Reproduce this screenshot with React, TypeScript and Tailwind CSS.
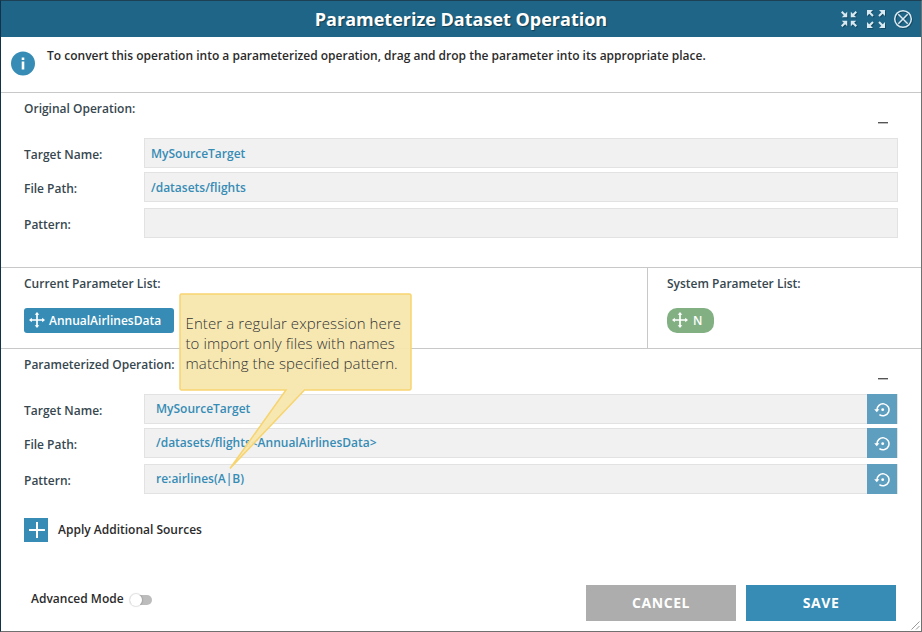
import type { ReactNode } from "react";

function CompressIcon() {
  return (
    <svg width="16" height="16" viewBox="0 0 16 16" className="drop-shadow-[1px_1px_0px_rgba(0,0,0,0.25)]" fill="none" stroke="#d9e9f1" strokeWidth="2">
      <path d="M0.700 0.700 4.500 4.500M15.300 0.700 11.500 4.500M0.700 15.300 4.500 11.500M15.300 15.300 11.500 11.500" />
      <path d="M6.200 0.800v5.400H0.800zM9.800 0.800v5.400h5.400zM6.200 15.200V9.800H0.800zM9.800 15.200V9.800h5.400z" fill="#d9e9f1" stroke="none" />
    </svg>
  );
}

function ExpandIcon() {
  return (
    <svg width="18" height="18" viewBox="0 0 18 18" className="drop-shadow-[1px_1px_0px_rgba(0,0,0,0.25)]" fill="none" stroke="#d9e9f1" strokeWidth="2">
      <path d="M1.500 1.500l4.500 4.500M16.500 1.500l-4.500 4.500M1.500 16.500l4.500-4.500M16.500 16.500l-4.500-4.500" />
      <path d="M0 0h6L0 6zM18 0h-6l6 6zM0 18h6l-6-6zM18 18h-6l6-6z" fill="#d9e9f1" stroke="none" />
    </svg>
  );
}

function CloseIcon() {
  return (
    <svg width="20" height="20" viewBox="0 0 20 20" className="drop-shadow-[1px_1px_0px_rgba(0,0,0,0.25)]" fill="none" stroke="#d9e9f1" strokeWidth="1.5">
      <circle cx="10" cy="10" r="8.3" />
      <path d="M5.3 5.3l9.4 9.4M14.7 5.3l-9.4 9.4" />
    </svg>
  );
}

function MoveIcon() {
  return (
    <svg width="16" height="16" viewBox="0 0 16 16" className="mb-px shrink-0" fill="#fff">
      <path d="M7.150 2h1.700v5.150H14v1.700H8.850V14h-1.700V8.850H2v-1.700h5.150z" />
      <path d="M8 0l2.300 2.800H5.700zM8 16l2.300-2.800H5.700zM0 8l2.800-2.300v4.600zM16 8l-2.800-2.300v4.600z" />
    </svg>
  );
}

function RestoreIcon() {
  return (
    <svg width="16" height="16" viewBox="0 0 16 16" className="mt-px" fill="none" stroke="#fff">
      <path d="M3 8.200A6 6 0 1 1 5.400 12.600" strokeWidth="1.500" />
      <path d="M0.200 7.200h5.200L2.800 10.200z" fill="#fff" stroke="none" />
      <circle cx="8.700" cy="7.700" r="1.400" fill="#fff" stroke="none" />
    </svg>
  );
}

function Label({ children }: { children: ReactNode }) {
  return <div className="whitespace-nowrap text-[12px] leading-4 font-semibold text-[#37474f]">{children}</div>;
}

function Field({ label, value, restore = false }: { label: string; value: string; restore?: boolean }) {
  return (
    <div className="flex h-[30px]">
      <div className="w-[120px] shrink-0 pt-[9px]">
        <Label>{label}</Label>
      </div>
      <div className="flex flex-1 border border-[#e2e2e2] bg-[#f1f1f1]">
        <div className={`flex-1 text-[12px] leading-4 font-semibold text-[#368cb5] ${restore ? "pt-[6px] pl-[11px]" : "pt-[7px] pl-[6px]"}`}>
          {value}
        </div>
        {restore && (
          <button className="-my-px flex w-[30px] items-center justify-center bg-[#5e9fc0]">
            <RestoreIcon />
          </button>
        )}
      </div>
    </div>
  );
}

function Collapse() {
  return <div className="h-[2px] w-[10px] border-t border-[#555] bg-[#bdbdbd]" />;
}

export default function App() {
  return (
    <div className="relative flex h-[632px] w-[922px] flex-col overflow-hidden border border-t-[#1d4055] border-r-[#707070] border-b-[#707070] border-l-[#12324a] bg-white font-['Open_Sans','Noto_Sans',sans-serif]">
      <header className="relative flex h-9 shrink-0 items-center justify-center bg-[#1e6587]">
        <h1 className="text-[18px] leading-6 font-bold whitespace-nowrap text-white [text-shadow:1px_1px_1px_rgba(0,0,0,0.4)]">
          Parameterize Dataset Operation
        </h1>
        <div className="absolute right-[8px] flex items-center">
          <CompressIcon />
          <div className="ml-[10px]">
            <ExpandIcon />
          </div>
          <div className="ml-[8px]">
            <CloseIcon />
          </div>
        </div>
      </header>

      <section className="flex h-14 shrink-0 border-b border-[#c8c8c8] pl-[10px]">
        <svg width="24" height="25" viewBox="0 0 24 25" className="mt-[14px] shrink-0">
          <circle cx="12" cy="12.500" r="12" fill="#368cb5" />
          <path d="M10.700 6.500h2.600V9h-2.600zM10.700 10.500h2.600V18.500h-2.600z" fill="#fff" />
        </svg>
        <p className="mt-[11px] ml-3 text-[12px] leading-4 font-semibold whitespace-nowrap text-[#2b2b2b]">
          To convert this operation into a parameterized operation, drag and drop the parameter into its appropriate place.
        </p>
      </section>

      <section className="h-[175px] shrink-0 border-b border-[#c8c8c8] pt-2 pr-[23px] pl-[23px]">
        <Label>Original Operation:</Label>
        <div className="flex h-[21px] justify-end pt-[5px] pr-[10px]">
          <Collapse />
        </div>
        <Field label="Target Name:" value="MySourceTarget" />
        <div className="mt-1">
          <Field label="File Path:" value="/datasets/flights" />
        </div>
        <div className="mt-[6px]">
          <Field label="Pattern:" value="" />
        </div>
      </section>

      <section className="flex h-[81px] shrink-0 border-b border-[#c8c8c8]">
        <div className="w-[647px] border-r border-[#c8c8c8] pt-2 pl-[23px]">
          <Label>Current Parameter List:</Label>
          <div className="mt-4 flex h-[25px] w-[150px] items-center gap-[4px] rounded-[3px] bg-[#368cb5] pl-[5px] text-[12px] font-semibold text-white">
            <MoveIcon />
            <span>AnnualAirlinesData</span>
          </div>
        </div>
        <div className="pt-2 pl-[19px]">
          <Label>System Parameter List:</Label>
          <div className="mt-4 flex h-[25px] w-[47px] items-center gap-[5px] rounded-[10px] bg-[#82b083] pl-[5px] text-[12px] font-semibold text-white">
            <MoveIcon />
            <span>N</span>
          </div>
        </div>
      </section>

      <section className="shrink-0 pt-2 pr-[23px] pl-[23px]">
        <Label>Parameterized Operation:</Label>
        <div className="flex h-[21px] justify-end pt-[5px] pr-[10px]">
          <Collapse />
        </div>
        <Field label="Target Name:" value="MySourceTarget" restore />
        <div className="mt-1">
          <Field label="File Path:" value="/datasets/flights<AnnualAirlinesData>" restore />
        </div>
        <div className="mt-[6px]">
          <Field label="Pattern:" value="re:airlines(A|B)" restore />
        </div>
        <div className="mt-6 flex items-center gap-[10px]">
          <button className="flex size-6 items-center justify-center bg-[#368cb5]">
            <svg width="16" height="16" viewBox="0 0 16 16" className="ml-[2px]" fill="#fff">
              <path d="M7 0h2v7h7v2H9v7H7V9H0V7h7z" />
            </svg>
          </button>
          <span className="text-[12px] leading-4 font-semibold text-[#2b2b2b]">Apply Additional Sources</span>
        </div>
      </section>

      <footer className="mt-[43px] flex h-9 shrink-0 items-center pr-[25px] pl-[30px]">
        <span className="mb-[9px] text-[12px] leading-4 font-semibold text-[#2b2b2b]">Advanced Mode</span>
        <div className="mb-[6px] ml-[6px] flex h-[14px] w-[23px] items-center">
          <div className="flex h-[10px] w-[22px] items-center rounded-full bg-[#bcbcbc]">
            <div className="size-[12px] shrink-0 rounded-full bg-white shadow-[0_0_1px_1px_rgba(0,0,0,0.12)]" />
          </div>
        </div>
        <button className="ml-auto h-9 w-[150px] bg-[#adadad] pb-[2px] text-[14px] font-bold tracking-[0.6px] text-white">CANCEL</button>
        <button className="ml-[10px] h-9 w-[150px] bg-[#368cb5] pb-[2px] text-[14px] font-bold tracking-[0.6px] text-white">SAVE</button>
      </footer>

      <svg width="9" height="9" viewBox="0 0 9 9" className="absolute right-px bottom-px" stroke="#999" fill="none">
        <path d="M0.500 8.500l8-8M5 8.500L8.500 5" />
      </svg>

      <div className="absolute top-[292px] left-[178px] h-[178px] w-[234px]">
        <svg width="234" height="178" viewBox="0 0 234 178" className="absolute inset-0">
          <path d="M2.500 1H230.500a1.500 1.500 0 0 1 1.500 1.500V95.500a1.500 1.500 0 0 1-1.500 1.500H125.500L51 175.500 107 97H2.500A1.500 1.500 0 0 1 1 95.500V2.500A1.500 1.500 0 0 1 2.500 1z" fill="#f7e7ae" fillOpacity="0.950" stroke="#f7d470" strokeWidth="1.500" />
        </svg>
        <p className="relative pt-[20px] pl-[6.500px] text-[15px] leading-5 font-light tracking-[0.1px] whitespace-nowrap text-[#333]">
          Enter a regular expression here
          <br />
          to import only files with names
          <br />
          matching the specified pattern.
        </p>
      </div>
    </div>
  );
}
